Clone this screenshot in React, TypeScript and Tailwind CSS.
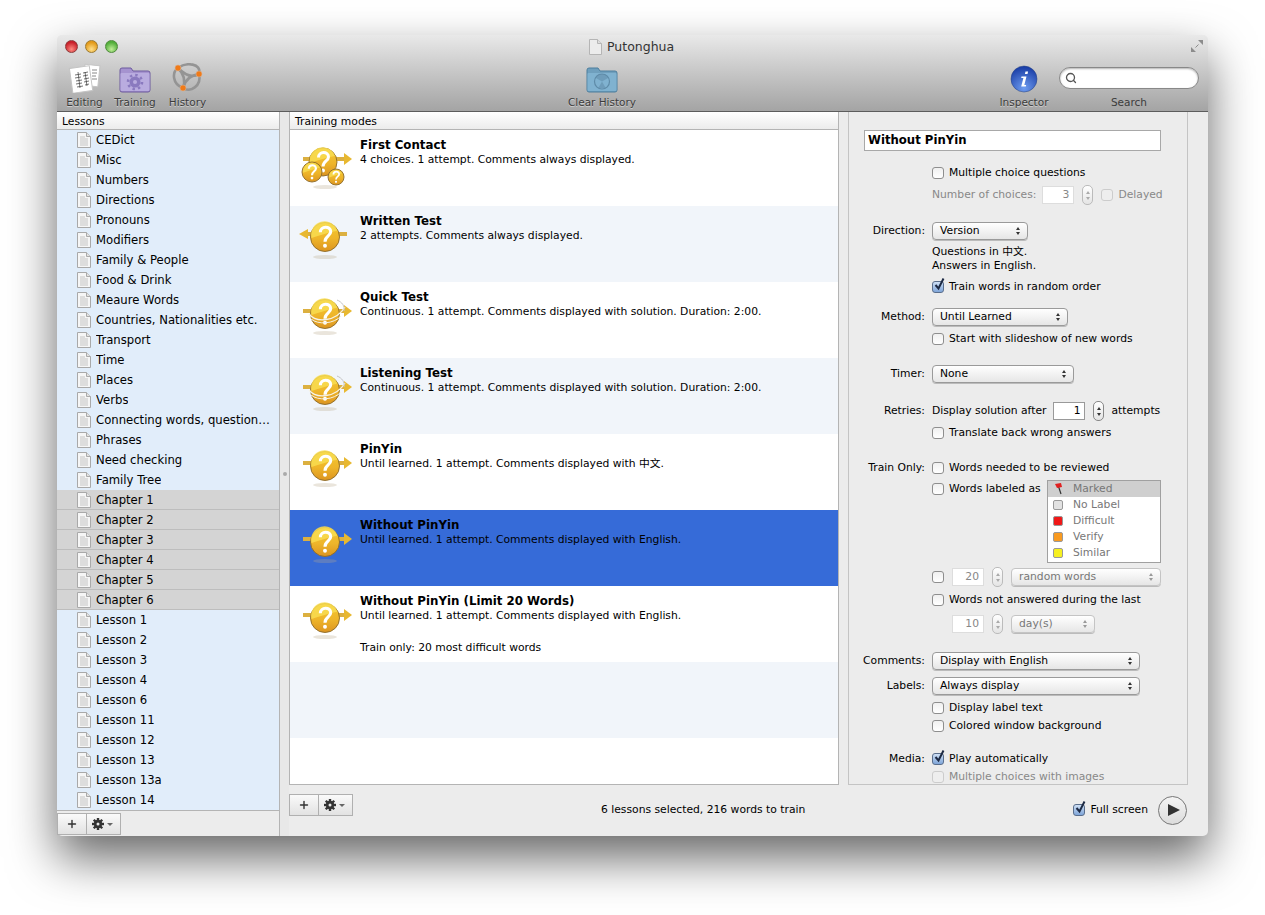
import React from 'react';
import { Plus, Search } from 'lucide-react';

const FONT = "font-['DejaVu_Sans','Noto_Sans_CJK_SC',sans-serif]";

const LESSONS = [
  'CEDict', 'Misc', 'Numbers', 'Directions', 'Pronouns', 'Modifiers', 'Family & People', 'Food & Drink',
  'Meaure Words', 'Countries, Nationalities etc.', 'Transport', 'Time', 'Places', 'Verbs',
  'Connecting words, question…', 'Phrases', 'Need checking', 'Family Tree', 'Chapter 1', 'Chapter 2',
  'Chapter 3', 'Chapter 4', 'Chapter 5', 'Chapter 6', 'Lesson 1', 'Lesson 2', 'Lesson 3', 'Lesson 4',
  'Lesson 6', 'Lesson 11', 'Lesson 12', 'Lesson 13', 'Lesson 13a', 'Lesson 14',
];

type Mode = { title: string; lines: string[]; icon: 'first' | 'left' | 'ring' | 'plain' };

const MODES: Mode[] = [
  { title: 'First Contact', lines: ['4 choices. 1 attempt. Comments always displayed.'], icon: 'first' },
  { title: 'Written Test', lines: ['2 attempts. Comments always displayed.'], icon: 'left' },
  { title: 'Quick Test', lines: ['Continuous. 1 attempt. Comments displayed with solution. Duration: 2:00.'], icon: 'ring' },
  { title: 'Listening Test', lines: ['Continuous. 1 attempt. Comments displayed with solution. Duration: 2:00.'], icon: 'ring' },
  { title: 'PinYin', lines: ['Until learned. 1 attempt. Comments displayed with 中文.'], icon: 'plain' },
  { title: 'Without PinYin', lines: ['Until learned. 1 attempt. Comments displayed with English.'], icon: 'plain' },
  { title: 'Without PinYin (Limit 20 Words)', lines: ['Until learned. 1 attempt. Comments displayed with English.', '', 'Train only: 20 most difficult words'], icon: 'plain' },
];

function Ball({ cx, cy, r }: { cx: number; cy: number; r: number }) {
  const k = r / 14;
  return (
    <g>
      <circle cx={cx} cy={cy} r={r} fill="url(#gold)" stroke="#8a6a2a" strokeWidth="0.9" />
      <path d={`M${cx - r + 1} ${cy + 1 * k}A${r - 1} ${r - 1} 0 0 1 ${cx + r - 2} ${cy - 6 * k}C${cx + 5 * k} ${cy - 5 * k} ${cx} ${cy - 3 * k} ${cx - r + 1} ${cy + 1 * k}Z`} fill="#f8dc50" opacity="0.85" />
      <path d={`M${cx - 4.5 * k} ${cy - 4.5 * k}C${cx - 4.5 * k} ${cy - 11 * k} ${cx + 5.5 * k} ${cy - 11 * k} ${cx + 5.5 * k} ${cy - 5 * k}C${cx + 5.5 * k} ${cy - 1 * k} ${cx} ${cy - 1 * k} ${cx} ${cy + 4.5 * k}`} fill="none" stroke="#fff" strokeWidth={3 * k} />
      <circle cx={cx} cy={cy + 8.5 * k} r={1.9 * k} fill="#fff" />
    </g>
  );
}

function ModeIcon({ kind }: { kind: Mode['icon'] }) {
  const cy = kind === 'left' ? 23 : 24;
  return (
    <svg width="56" height="54" viewBox="0 0 56 54" className="shrink-0">
      <defs>
        <linearGradient id="gold" x1="0" y1="0" x2="0" y2="1">
          <stop offset="0" stopColor="#f3c732" />
          <stop offset="0.55" stopColor="#eeb52a" />
          <stop offset="1" stopColor="#dc9420" />
        </linearGradient>
      </defs>
      <ellipse cx="27" cy={kind === 'first' ? 49 : 43} rx="12" ry="2" fill="#b9a98a" opacity="0.3" />
      {kind === 'left' ? (
        <>
          <path d="M9 18h40v4H9z" fill="#dcb040" />
          <path d="M1 20l9-5v10z" fill="#e8b830" />
        </>
      ) : (
        <>
          <path d="M5 19h42v4H5z" fill="#dcb040" />
          <path d="M46 15l8 6-8 6z" fill="#e8b830" />
        </>
      )}
      <Ball cx={kind === 'first' ? 25 : 27} cy={cy} r={kind === 'first' ? 14 : 14.5} />
      {kind === 'first' && (
        <>
          <Ball cx={14} cy={34} r={10} />
          <Ball cx={38} cy={39} r={8} />
        </>
      )}
      {kind === 'ring' && (
        <>
          <path d="M11 24C18 33 38 32 47 17" fill="none" stroke="#f6f2e4" strokeWidth="1.3" />
          <path d="M13 29C20 35 36 34 43 26" fill="none" stroke="#f6f2e4" strokeWidth="1" />
          <path d="M39 10c5 2 8 6 7 11" fill="none" stroke="#c4c4c4" strokeWidth="1" />
        </>
      )}
    </svg>
  );
}

function DocIcon() {
  return (
    <svg width="14" height="16" viewBox="0 0 14 16" className="shrink-0">
      <path d="M.5.5h9l4 4v11H.5z" fill="#f6f6f6" stroke="#a9a9a9" />
      <path d="M9.5.5v4h4" fill="#e2e2e2" stroke="#a9a9a9" />
      <path d="M3 5h5M3 7h8M3 9h8M3 11h8M3 13h8" stroke="#c4c4c4" />
    </svg>
  );
}

function GearIcon() {
  return (
    <svg width="23" height="12" viewBox="0 0 23 12" className="shrink-0">
      <g fill="#333">
        <circle cx="6" cy="6" r="4.2" />
        {[0, 45, 90, 135].map((a) => (
          <rect key={a} x="4.8" y="0" width="2.4" height="12" transform={`rotate(${a} 6 6)`} />
        ))}
        <path d="M15 5h6l-3 3z" fill="#666" />
      </g>
      <circle cx="6" cy="6" r="1.5" fill="#e8e8e8" />
    </svg>
  );
}

function TinyStepper({ dim }: { dim?: boolean }) {
  return (
    <div className={`flex h-[20px] w-[11px] flex-col items-center justify-center gap-[3px] rounded-[5px] border bg-gradient-to-b from-white to-[#e4e4e4] ${dim ? 'border-[#bbb]' : 'border-[#888]'}`}>
      <span className={`h-0 w-0 border-x-[2.5px] border-b-[3px] border-x-transparent ${dim ? 'border-b-[#aaa]' : 'border-b-[#333]'}`} />
      <span className={`h-0 w-0 border-x-[2.5px] border-t-[3px] border-x-transparent ${dim ? 'border-t-[#aaa]' : 'border-t-[#333]'}`} />
    </div>
  );
}

function Popup({ text, w, dim }: { text: string; w: string; dim?: boolean }) {
  return (
    <div className={`flex h-[18px] ${w} items-center justify-between rounded-[4px] border bg-gradient-to-b from-white to-[#e6e6e6] pl-[7px] pr-[7px] shadow-[0_1px_0_#bbb] ${dim ? 'border-[#c4c4c4] text-[#777]' : 'border-[#9a9a9a] text-black'}`}>
      <span>{text}</span>
      <span className="flex flex-col gap-[2px]">
        <span className={`h-0 w-0 border-x-[2.5px] border-b-[3px] border-x-transparent ${dim ? 'border-b-[#999]' : 'border-b-[#333]'}`} />
        <span className={`h-0 w-0 border-x-[2.5px] border-t-[3px] border-x-transparent ${dim ? 'border-t-[#999]' : 'border-t-[#333]'}`} />
      </span>
    </div>
  );
}

function Check({ on, dim }: { on?: boolean; dim?: boolean }) {
  return (
    <span className={`relative block h-[12px] w-[12px] shrink-0 rounded-[3px] border ${on ? 'border-[#5a6e8c] bg-gradient-to-b from-[#cfe0f5] to-[#7fa5d8]' : dim ? 'border-[#ccc] bg-[#eee]' : 'border-[#8e8e8e] bg-gradient-to-b from-[#f0f0f0] to-white'}`}>
      {on && (
        <svg width="13" height="15" viewBox="0 0 13 15" className="absolute bottom-[0px] left-[0px]">
          <path d="M2.5 8l3 3.5L10.5 1.5" fill="none" stroke="#1d2a44" strokeWidth="2" />
        </svg>
      )}
    </span>
  );
}

function CheckLine({ label, on, dim }: { label: string; on?: boolean; dim?: boolean }) {
  return (
    <div className={`flex items-center gap-[5px] ${dim ? 'text-[#888]' : ''}`}>
      <Check on={on} dim={dim} />
      <span>{label}</span>
    </div>
  );
}

function Row({ label, mt, children }: { label?: string; mt?: string; children?: React.ReactNode }) {
  return (
    <div className={`flex h-[20px] items-center ${mt ?? ''}`}>
      <div className="w-[76px] shrink-0 text-right">{label}</div>
      <div className="ml-[7px] flex min-w-0 flex-1 items-center">{children}</div>
    </div>
  );
}

function NumBox({ value, dim }: { value: string; dim?: boolean }) {
  return (
    <div className={`flex h-[18px] w-[32px] items-center justify-end border bg-white pr-[4px] ${dim ? 'border-[#ddd] text-[#888]' : 'border-[#999] text-black'}`}>
      {value}
    </div>
  );
}

function LabelSwatch({ color }: { color: string }) {
  return <span className={`block h-[10px] w-[10px] rounded-[2px] border border-[#999] ${color}`} />;
}

function SideButtons() {
  return (
    <div className="flex h-[22px] w-[64px] border border-[#b0b0b0] bg-gradient-to-b from-[#fafafa] to-[#e2e2e2]">
      <div className="flex w-[29px] items-center justify-center border-r border-[#b0b0b0]">
        <Plus size={12} strokeWidth={2.8} className="text-[#333]" />
      </div>
      <div className="flex flex-1 items-center justify-center">
        <GearIcon />
      </div>
    </div>
  );
}

function ToolItem({ label, w, children }: { label: string; w: string; children: React.ReactNode }) {
  return (
    <div className={`flex ${w} flex-col items-center`}>
      <div className="flex h-[31px] items-end justify-center">{children}</div>
      <div className="mt-[2px] text-[#3c3c3c] [text-shadow:0_1px_0_rgba(255,255,255,.45)]">{label}</div>
    </div>
  );
}

function HeaderCell({ label }: { label: string }) {
  return (
    <div className="flex h-[18px] shrink-0 items-center border-b border-[#b4b4b4] bg-gradient-to-b from-white to-[#ececec] pl-[5px] pt-[3px] text-[10.75px] text-black">
      {label}
    </div>
  );
}

function Toolbar() {
  return (
    <div className="h-[77px] shrink-0 rounded-t-[5px] border-b border-[#5c5c5c] bg-gradient-to-b from-[#e9e9e9] to-[#a4a4a4]">
      <div className="relative flex h-[22px] items-center">
        <div className="ml-[8px] flex gap-[7px]">
          <span className="block h-[13px] w-[13px] rounded-full border border-[#8c3a3a] bg-[radial-gradient(circle_at_50%_75%,#ff8a80,#c8202a_70%)]" />
          <span className="block h-[13px] w-[13px] rounded-full border border-[#9c7a30] bg-[radial-gradient(circle_at_50%_75%,#ffe08a,#e39a1a_70%)]" />
          <span className="block h-[13px] w-[13px] rounded-full border border-[#4f8a3c] bg-[radial-gradient(circle_at_50%_75%,#c0ee98,#52ae3a_70%)]" />
        </div>
        <div className="absolute left-[532px] top-[3px] flex items-center gap-[5px] text-[12.5px] text-[#333]">
          <svg width="13" height="16" viewBox="0 0 13 16">
            <path d="M.5.5h8l4 4v11H.5z" fill="#ececec" stroke="#b5b5b5" />
            <path d="M8.5.5v4h4" fill="#ddd" stroke="#b5b5b5" />
          </svg>
          <span>Putonghua</span>
        </div>
        <svg width="14" height="14" viewBox="0 0 14 14" className="absolute right-[4px] top-[4px]">
          <path d="M8 1h5v5zM1 13V8l5 5z" fill="#8c8c8c" />
          <path d="M8.5 5.5l-3 3" stroke="#8c8c8c" strokeWidth="1" />
        </svg>
      </div>
      <div className="flex h-[54px] items-start pt-[5px] text-[10.5px]">
        <div className="ml-[5px] flex">
          <ToolItem label="Editing" w="w-[45px]">
            <svg width="34" height="30" viewBox="0 0 34 30">
              <rect x="16" y="2" width="15" height="21" fill="#fff" stroke="#c4c4c4" transform="rotate(6 23 12)" />
              <rect x="3" y="4" width="20" height="25" fill="#fff" stroke="#c4c4c4" transform="rotate(-8 13 16)" />
              <path d="M7 12l6-1M7 15l6-1M8 18l6-1M8 21l6-1M9 24l6-1M15 10l5-1M15 13l5-1M16 16l5-1M16 19l5-1M17 22l4-1M10 9l2 16M17 9l2 14" stroke="#444" strokeWidth="0.75" />
              <path d="M24 7h5M24 10h5M24 13h4M24 16h5" stroke="#888" />
            </svg>
          </ToolItem>
          <ToolItem label="Training" w="w-[56px]">
            <svg width="32" height="28" viewBox="0 0 32 28">
              <path d="M1 5q0-2 2-2h9l2 3h15q2 0 2 2v17q0 2-2 2H3q-2 0-2-2z" fill="#a593cf" stroke="#6d5a9e" />
              <rect x="1.5" y="8" width="29" height="18" rx="1" fill="#b9acdf" />
              <circle cx="16" cy="17" r="5.5" fill="#8a7abf" />
              <circle cx="16" cy="17" r="7" fill="none" stroke="#8a7abf" strokeWidth="2.6" strokeDasharray="2.4 3.1" />
              <circle cx="16" cy="17" r="2" fill="#b9acdf" />
            </svg>
          </ToolItem>
          <ToolItem label="History" w="w-[49px]">
            <svg width="32" height="30" viewBox="0 0 32 30">
              <g fill="none" stroke="#949494" strokeWidth="2.6">
                <path d="M6 5C14 -1 30 0 27 11" />
                <path d="M27 11C30 23 18 30 11 25" />
                <path d="M11 25C0 21 0 9 6 5" />
                <path d="M6 5Q18 17 27 11" />
                <path d="M27 11Q14 13 11 25" />
                <path d="M11 25Q15 14 6 5" />
              </g>
              <circle cx="6" cy="5" r="3" fill="#f07a18" stroke="#d8b090" strokeWidth="0.6" />
              <circle cx="27" cy="11" r="3" fill="#f07a18" stroke="#d8b090" strokeWidth="0.6" />
              <circle cx="11" cy="25" r="3" fill="#f07a18" stroke="#d8b090" strokeWidth="0.6" />
            </svg>
          </ToolItem>
        </div>
        <div className="ml-[350px]">
          <ToolItem label="Clear History" w="w-[80px]">
            <svg width="32" height="28" viewBox="0 0 32 28">
              <path d="M1 5q0-2 2-2h9l2 3h15q2 0 2 2v17q0 2-2 2H3q-2 0-2-2z" fill="#6f9fbd" stroke="#4d7f9e" />
              <rect x="1.5" y="8" width="29" height="18" rx="1" fill="#80b2d0" />
              <circle cx="16" cy="16.5" r="7.5" fill="none" stroke="#5e8ba8" strokeWidth="1.2" />
              <path d="M16 16.5l-6.5-3.7a7.5 7.5 0 0 1 6.5-3.8zM16 16.5l6.5-3.7a7.5 7.5 0 0 0-6.5-3.8zM16 16.5l-3.7 6.5h7.4z" fill="#5e8ba8" opacity="0.55" />
            </svg>
          </ToolItem>
        </div>
        <div className="ml-[352px]">
          <ToolItem label="Inspector" w="w-[60px]">
            <svg width="28" height="28" viewBox="0 0 28 28">
              <defs>
                <radialGradient id="blue" cx="50%" cy="85%" r="80%">
                  <stop offset="0" stopColor="#6f9df0" />
                  <stop offset="1" stopColor="#1b3fa8" />
                </radialGradient>
              </defs>
              <ellipse cx="14" cy="14" rx="13" ry="13" fill="url(#blue)" stroke="#24407e" strokeWidth="0.5" />
              <path d="M15.5 6.5h2.6l-.6 2.6h-2.6zM11.5 11.5h5l-2.2 8.5h1.9l-.4 1.6h-4.6l2.2-8.5h-2.2z" fill="#fff" />
            </svg>
          </ToolItem>
        </div>
        <div className="ml-[5px] flex flex-col items-center">
          <div className="flex h-[31px] items-center pt-[1px]">
            <div className="flex h-[22px] w-[140px] items-center rounded-full border border-[#888] bg-white pl-[5px] shadow-[inset_0_1px_2px_rgba(0,0,0,.3)]">
              <Search size={12} strokeWidth={2.6} className="text-[#555]" />
            </div>
          </div>
          <div className="mt-[2px] text-[#3c3c3c]">Search</div>
        </div>
      </div>
    </div>
  );
}

function LessonsPane() {
  return (
    <div className="flex w-[222px] shrink-0 flex-col">
      <HeaderCell label="Lessons" />
      <div className="h-[681px] shrink-0 overflow-hidden border-b border-[#b4b4b4] bg-[#e1edfa] text-[11.65px]">
        {LESSONS.map((name) => {
          const chapter = name.startsWith('Chapter');
          return (
            <div
              key={name}
              className={`flex h-[20px] items-center gap-[5px] pl-[20px] text-black ${chapter ? 'border-b border-[#bdbdbd] bg-[#d4d4d4]' : ''}`}
            >
              <DocIcon />
              <span className="mt-[2px] truncate">{name}</span>
            </div>
          );
        })}
      </div>
      <div className="mt-[2px]">
        <SideButtons />
      </div>
    </div>
  );
}

function ModeRow({ mode, i }: { mode: Mode; i: number }) {
  const selected = i === 5;
  return (
    <div className={`flex h-[76px] shrink-0 pl-[8px] ${selected ? 'bg-[#366bd8] text-black' : i % 2 ? 'bg-[#f1f5fa]' : 'bg-white'}`}>
      <div className="pt-[8px]">
        <ModeIcon kind={mode.icon} />
      </div>
      <div className="ml-[6px] pt-[7px]">
        <div className="text-[11.8px] leading-[16px] font-bold text-black">{mode.title}</div>
        {mode.lines.map((line, k) => (
          <div key={k} className="h-[16px] leading-[14px]">
            {line}
          </div>
        ))}
      </div>
    </div>
  );
}

function ModesPane() {
  return (
    <div className="flex w-[550px] shrink-0 flex-col">
      <div className="flex h-[673px] shrink-0 flex-col overflow-hidden border-x border-b border-[#b4b4b4] bg-white">
        <HeaderCell label="Training modes" />
        {MODES.map((m, i) => (
          <ModeRow key={m.title} mode={m} i={i} />
        ))}
        <div className="h-[76px] shrink-0 bg-[#f1f5fa]" />
      </div>
      <div className="relative flex h-[50px] items-center pl-[312px] pt-[1px] text-black">
        <div className="absolute left-0 top-[9px]">
          <SideButtons />
        </div>
        <span>6 lessons selected, 216 words to train</span>
      </div>
    </div>
  );
}

function Inspector() {
  return (
    <div className="flex flex-1 flex-col pl-[9px] pr-[20px]">
      <div className="h-[673px] shrink-0 overflow-hidden border-x border-b border-[#c4c4c4] pt-[18px]">
        <div className="ml-[15px] mr-[26px] flex h-[21px] items-center border border-[#a8a8a8] bg-white pl-[3px] pt-[1px] text-[11.7px] font-bold">
          Without PinYin
        </div>
        <Row mt="mt-[12px]"><CheckLine label="Multiple choice questions" /></Row>
        <Row mt="mt-[2px]">
          <span className="text-[#888]">Number of choices:</span>
          <div className="ml-[6px]"><NumBox value="3" dim /></div>
          <div className="ml-[8px]"><TinyStepper dim /></div>
          <div className="ml-[8px]"><CheckLine label="Delayed" dim /></div>
        </Row>
        <Row label="Direction:" mt="mt-[16px]"><Popup text="Version" w="w-[96px]" /></Row>
        <div className="mt-[4px] pl-[83px] leading-[14px]">
          <div>Questions in 中文.</div>
          <div>Answers in English.</div>
        </div>
        <Row mt="mt-[4px]"><CheckLine label="Train words in random order" on /></Row>
        <Row label="Method:" mt="mt-[10px]"><Popup text="Until Learned" w="w-[136px]" /></Row>
        <Row mt="mt-[2px]"><CheckLine label="Start with slideshow of new words" /></Row>
        <Row label="Timer:" mt="mt-[15px]"><Popup text="None" w="w-[142px]" /></Row>
        <Row label="Retries:" mt="mt-[17px]">
          <span>Display solution after</span>
          <div className="ml-[7px]"><NumBox value="1" /></div>
          <div className="ml-[8px]"><TinyStepper /></div>
          <span className="ml-[7px]">attempts</span>
        </Row>
        <Row mt="mt-[2px]"><CheckLine label="Translate back wrong answers" /></Row>
        <Row label="Train Only:" mt="mt-[15px]"><CheckLine label="Words needed to be reviewed" /></Row>
        <div className="mt-[2px] flex h-[83px] items-start pl-[83px]">
          <div className="flex h-[18px] w-[115px] items-center"><CheckLine label="Words labeled as" /></div>
          <div className="h-[83px] w-[114px] border border-[#a0a0a0] bg-white text-[#777]">
            <div className="flex h-[16px] items-center bg-[#cfcfcf] pl-[5px]">
              <svg width="14" height="14" viewBox="0 0 14 14" className="shrink-0">
                <path d="M5 3l3 9" stroke="#333" strokeWidth="1.2" />
                <path d="M2 2l6-1 1 4-5 1z" fill="#e02020" />
              </svg>
              <span className="ml-[6px]">Marked</span>
            </div>
            {[
              ['No Label', 'bg-[#e2e2e2]'],
              ['Difficult', 'bg-[#f01818]'],
              ['Verify', 'bg-[#f89a20]'],
              ['Similar', 'bg-[#f6f020]'],
            ].map(([t, c]) => (
              <div key={t} className="flex h-[16px] items-center pl-[5px]">
                <LabelSwatch color={c} />
                <span className="ml-[10px]">{t}</span>
              </div>
            ))}
          </div>
        </div>
        <Row mt="mt-[4px]">
          <Check />
          <div className="ml-[8px]"><NumBox value="20" dim /></div>
          <div className="ml-[8px]"><TinyStepper dim /></div>
          <div className="ml-[8px]"><Popup text="random words" w="w-[150px]" dim /></div>
        </Row>
        <Row mt="mt-[3px]"><CheckLine label="Words not answered during the last" /></Row>
        <Row mt="mt-[4px]">
          <div className="ml-[20px]"><NumBox value="10" dim /></div>
          <div className="ml-[8px]"><TinyStepper dim /></div>
          <div className="ml-[8px]"><Popup text="day(s)" w="w-[84px]" dim /></div>
        </Row>
        <Row label="Comments:" mt="mt-[17px]"><Popup text="Display with English" w="w-[208px]" /></Row>
        <Row label="Labels:" mt="mt-[5px]"><Popup text="Always display" w="w-[208px]" /></Row>
        <Row mt="mt-[2px]"><CheckLine label="Display label text" /></Row>
        <Row mt="-mt-[2px]"><CheckLine label="Colored window background" /></Row>
        <Row label="Media:" mt="mt-[13px]"><CheckLine label="Play automatically" on /></Row>
        <Row mt="-mt-[2px]"><CheckLine label="Multiple choices with images" dim /></Row>
      </div>
      <div className="relative -mr-[20px] flex h-[50px] items-center justify-end pr-[21px]">
        <CheckLine label="Full screen" on />
        <div className="ml-[10px] flex h-[29px] w-[29px] items-center justify-center rounded-full border border-[#777] bg-gradient-to-b from-[#f4f4f4] to-[#dcdcdc]">
          <svg width="14" height="14" viewBox="0 0 14 14" className="ml-[2px]">
            <path d="M1 1l12 6-12 6z" fill="#333" />
          </svg>
        </div>
      </div>
    </div>
  );
}

export default function App() {
  return (
    <div className={`h-[915px] w-[1265px] overflow-hidden bg-white pl-[57px] pt-[35px] text-[10.75px] ${FONT}`}>
      <div className="flex h-[801px] w-[1151px] flex-col rounded-[5px] bg-[#ececec] shadow-[0_22px_48px_rgba(0,0,0,.6)]">
        <Toolbar />
        <div className="flex min-h-0 flex-1">
          <LessonsPane />
          <div className="flex w-[10px] shrink-0 items-center justify-center border-l border-[#b4b4b4] bg-[#e8e8e8]">
            <span className="block h-[4px] w-[4px] rounded-full bg-[#aaa]" />
          </div>
          <ModesPane />
          <Inspector />
        </div>
      </div>
    </div>
  );
}
